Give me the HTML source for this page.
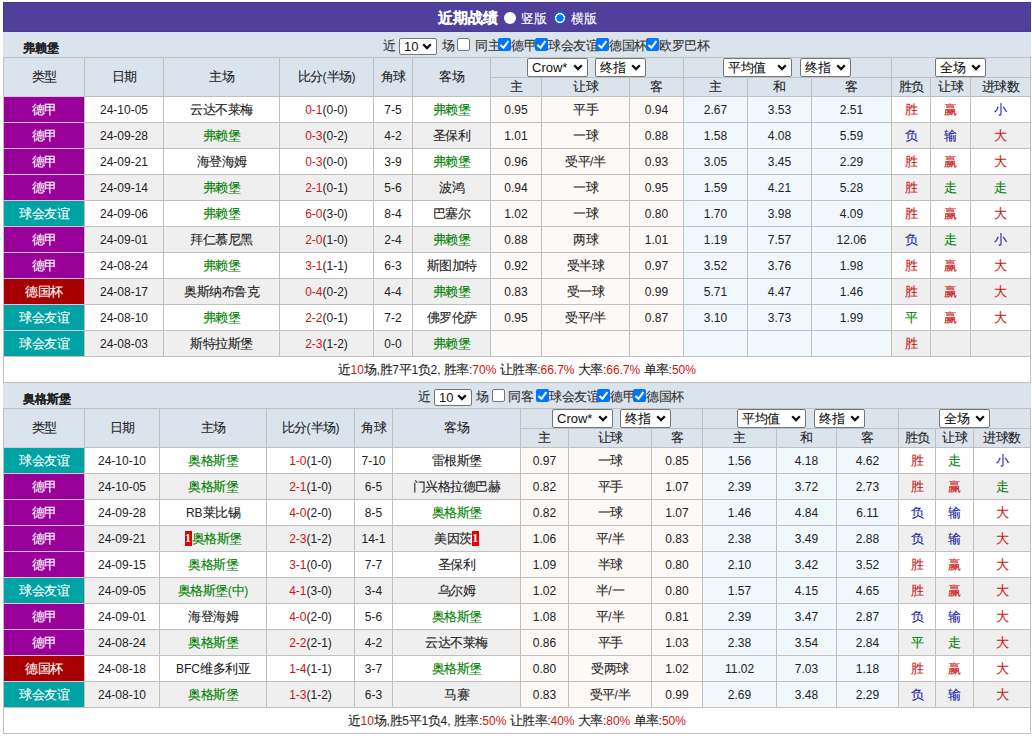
<!DOCTYPE html><html><head><meta charset="utf-8"><style>
html,body{margin:0;padding:0;background:#fff;width:1032px;height:736px;overflow:hidden}
body{position:relative;font-family:"Liberation Sans",sans-serif;font-size:12px;color:#222}
body div{position:absolute}
.c p{margin:0}
.z{font-style:normal;font-size:12.5px;letter-spacing:-0.5px;-webkit-text-stroke:0.1px currentColor}
.ttl .z{font-size:inherit;letter-spacing:0}
.c{display:flex;align-items:center;justify-content:center;white-space:nowrap;line-height:12px}
.t{white-space:nowrap;line-height:14px;color:#333}
.sel{background:#fff;border:1px solid #767676;border-radius:2px;font-size:13px;color:#111;line-height:15px}
.sel span{position:absolute;left:4px;top:1px}
.cb{width:11px;height:11px;border:1px solid #767676;border-radius:2px;background:#fff}
.cb.on{width:13px;height:13px;border:none;background:#0075ff}
.cb svg{position:absolute;left:0;top:0}
.radio{width:12px;height:12px;border-radius:50%;background:#fff}
.radio.on{width:12px;height:12px;border:none;background:radial-gradient(circle at 6px 6px,#0075ff 0,#0075ff 3.4px,#fff 3.9px,#fff 4.8px,#0075ff 5.2px,#0075ff 6px,rgba(0,117,255,0) 6.5px)}
.rc{display:inline-block;background:#e00000;color:#fff;font-weight:bold;width:7px;height:15px;line-height:15px;text-align:center;font-size:12px;font-family:'Liberation Serif',serif;vertical-align:baseline;margin:-3px 0 -3px;position:relative;top:-1px}
</style></head><body><div style="left:3px;top:2px;width:1028px;height:30px;background:#50409c;box-sizing:border-box;border:1px solid #4a3d8e;border-top-color:#463a86"></div><div class="t ttl" style="left:438px;top:9px;color:#fff;font-weight:bold;font-size:15px;line-height:18px"><i class="z">近期战绩</i></div><div class="radio" style="left:504px;top:12px"></div><div class="t" style="left:521px;top:12px;color:#fff"><i class="z">竖版</i></div><div class="radio on" style="left:554px;top:12px"></div><div class="t" style="left:571px;top:12px;color:#fff"><i class="z">横版</i></div><div style="left:3px;top:32px;width:1028px;height:25px;background:#dbe3ed"></div><div class="t ttl" style="left:23px;top:41px;font-weight:bold;color:#222"><i class="z">弗赖堡</i></div><div class="t" style="left:383px;top:39px;"><i class="z">近</i></div><div class="sel" style="left:399px;top:38px;width:36px;height:15px"><span style="top:0px">10</span><svg width="10" height="7" viewBox="0 0 10 7" style="position:absolute;right:4px;top:4px"><path d="M1.2 1.3 L5 5.1 L8.8 1.3" stroke="#111" stroke-width="2.3" fill="none"/></svg></div><div class="t" style="left:442px;top:39px;"><i class="z">场</i></div><div class="cb" style="left:457px;top:38px"></div><div class="t" style="left:475px;top:39px;"><i class="z">同主</i></div><div class="cb on" style="left:498px;top:38px"><svg width="13" height="13" viewBox="0 0 13 13"><path d="M2.4 7.0 L5.5 9.8 L10.4 3.0" stroke="#fff" stroke-width="2.1" fill="none"/></svg></div><div class="t" style="left:511px;top:39px;"><i class="z">德甲</i></div><div class="cb on" style="left:535px;top:38px"><svg width="13" height="13" viewBox="0 0 13 13"><path d="M2.4 7.0 L5.5 9.8 L10.4 3.0" stroke="#fff" stroke-width="2.1" fill="none"/></svg></div><div class="t" style="left:548px;top:39px;"><i class="z">球会友谊</i></div><div class="cb on" style="left:596px;top:38px"><svg width="13" height="13" viewBox="0 0 13 13"><path d="M2.4 7.0 L5.5 9.8 L10.4 3.0" stroke="#fff" stroke-width="2.1" fill="none"/></svg></div><div class="t" style="left:609px;top:39px;"><i class="z">德国杯</i></div><div class="cb on" style="left:646px;top:38px"><svg width="13" height="13" viewBox="0 0 13 13"><path d="M2.4 7.0 L5.5 9.8 L10.4 3.0" stroke="#fff" stroke-width="2.1" fill="none"/></svg></div><div class="t" style="left:659px;top:39px;"><i class="z">欧罗巴杯</i></div><div style="left:3px;top:57px;width:1028px;height:39px;background:#dbe3ed"></div><div style="left:3px;top:97px;width:1028px;height:25px;background:#fff"></div><div style="left:491px;top:97px;width:193px;height:25px;background:#fdf9f6"></div><div style="left:684px;top:97px;width:208px;height:25px;background:#f1f8fc"></div><div style="left:4px;top:97px;width:80px;height:25px;background:#990099"></div><div style="left:3px;top:123px;width:1028px;height:25px;background:#efefef"></div><div style="left:491px;top:123px;width:193px;height:25px;background:#fdf9f6"></div><div style="left:684px;top:123px;width:208px;height:25px;background:#f1f8fc"></div><div style="left:4px;top:123px;width:80px;height:25px;background:#990099"></div><div style="left:3px;top:149px;width:1028px;height:25px;background:#fff"></div><div style="left:491px;top:149px;width:193px;height:25px;background:#fdf9f6"></div><div style="left:684px;top:149px;width:208px;height:25px;background:#f1f8fc"></div><div style="left:4px;top:149px;width:80px;height:25px;background:#990099"></div><div style="left:3px;top:175px;width:1028px;height:25px;background:#efefef"></div><div style="left:491px;top:175px;width:193px;height:25px;background:#fdf9f6"></div><div style="left:684px;top:175px;width:208px;height:25px;background:#f1f8fc"></div><div style="left:4px;top:175px;width:80px;height:25px;background:#990099"></div><div style="left:3px;top:201px;width:1028px;height:25px;background:#fff"></div><div style="left:491px;top:201px;width:193px;height:25px;background:#fdf9f6"></div><div style="left:684px;top:201px;width:208px;height:25px;background:#f1f8fc"></div><div style="left:4px;top:201px;width:80px;height:25px;background:#00a3a3"></div><div style="left:3px;top:227px;width:1028px;height:25px;background:#efefef"></div><div style="left:491px;top:227px;width:193px;height:25px;background:#fdf9f6"></div><div style="left:684px;top:227px;width:208px;height:25px;background:#f1f8fc"></div><div style="left:4px;top:227px;width:80px;height:25px;background:#990099"></div><div style="left:3px;top:253px;width:1028px;height:25px;background:#fff"></div><div style="left:491px;top:253px;width:193px;height:25px;background:#fdf9f6"></div><div style="left:684px;top:253px;width:208px;height:25px;background:#f1f8fc"></div><div style="left:4px;top:253px;width:80px;height:25px;background:#990099"></div><div style="left:3px;top:279px;width:1028px;height:25px;background:#efefef"></div><div style="left:491px;top:279px;width:193px;height:25px;background:#fdf9f6"></div><div style="left:684px;top:279px;width:208px;height:25px;background:#f1f8fc"></div><div style="left:4px;top:279px;width:80px;height:25px;background:#a80000"></div><div style="left:3px;top:305px;width:1028px;height:25px;background:#fff"></div><div style="left:491px;top:305px;width:193px;height:25px;background:#fdf9f6"></div><div style="left:684px;top:305px;width:208px;height:25px;background:#f1f8fc"></div><div style="left:4px;top:305px;width:80px;height:25px;background:#00a3a3"></div><div style="left:3px;top:331px;width:1028px;height:25px;background:#efefef"></div><div style="left:491px;top:331px;width:193px;height:25px;background:#fdf9f6"></div><div style="left:684px;top:331px;width:208px;height:25px;background:#f1f8fc"></div><div style="left:4px;top:331px;width:80px;height:25px;background:#00a3a3"></div><div style="left:3px;top:357px;width:1028px;height:25px;background:#fff"></div><div style="left:3px;top:57px;width:1028px;height:1px;background:#c0c0c0"></div><div style="left:490px;top:77px;width:541px;height:1px;background:#c0c0c0"></div><div style="left:3px;top:96px;width:1028px;height:1px;background:#c0c0c0"></div><div style="left:3px;top:96px;width:1028px;height:1px;background:#c0c0c0"></div><div style="left:3px;top:122px;width:1028px;height:1px;background:#c0c0c0"></div><div style="left:3px;top:148px;width:1028px;height:1px;background:#c0c0c0"></div><div style="left:3px;top:174px;width:1028px;height:1px;background:#c0c0c0"></div><div style="left:3px;top:200px;width:1028px;height:1px;background:#c0c0c0"></div><div style="left:3px;top:226px;width:1028px;height:1px;background:#c0c0c0"></div><div style="left:3px;top:252px;width:1028px;height:1px;background:#c0c0c0"></div><div style="left:3px;top:278px;width:1028px;height:1px;background:#c0c0c0"></div><div style="left:3px;top:304px;width:1028px;height:1px;background:#c0c0c0"></div><div style="left:3px;top:330px;width:1028px;height:1px;background:#c0c0c0"></div><div style="left:3px;top:356px;width:1028px;height:1px;background:#c0c0c0"></div><div style="left:3px;top:382px;width:1028px;height:1px;background:#c0c0c0"></div><div style="left:3px;top:57px;width:1px;height:326px;background:#c0c0c0"></div><div style="left:1030px;top:57px;width:1px;height:326px;background:#c0c0c0"></div><div style="left:84px;top:57px;width:1px;height:300px;background:#c0c0c0"></div><div style="left:163px;top:57px;width:1px;height:300px;background:#c0c0c0"></div><div style="left:279px;top:57px;width:1px;height:300px;background:#c0c0c0"></div><div style="left:373px;top:57px;width:1px;height:300px;background:#c0c0c0"></div><div style="left:412px;top:57px;width:1px;height:300px;background:#c0c0c0"></div><div style="left:490px;top:57px;width:1px;height:300px;background:#c0c0c0"></div><div style="left:541px;top:77px;width:1px;height:280px;background:#c0c0c0"></div><div style="left:629px;top:77px;width:1px;height:280px;background:#c0c0c0"></div><div style="left:683px;top:57px;width:1px;height:300px;background:#c0c0c0"></div><div style="left:747px;top:77px;width:1px;height:280px;background:#c0c0c0"></div><div style="left:811px;top:77px;width:1px;height:280px;background:#c0c0c0"></div><div style="left:891px;top:57px;width:1px;height:300px;background:#c0c0c0"></div><div style="left:930px;top:77px;width:1px;height:280px;background:#c0c0c0"></div><div style="left:970px;top:77px;width:1px;height:280px;background:#c0c0c0"></div><div style="left:4px;top:122px;width:80px;height:1px;background:#e2c4e2"></div><div style="left:4px;top:148px;width:80px;height:1px;background:#e2c4e2"></div><div style="left:4px;top:174px;width:80px;height:1px;background:#e2c4e2"></div><div style="left:4px;top:200px;width:80px;height:1px;background:#e2c4e2"></div><div style="left:4px;top:226px;width:80px;height:1px;background:#e2c4e2"></div><div style="left:4px;top:252px;width:80px;height:1px;background:#e2c4e2"></div><div style="left:4px;top:278px;width:80px;height:1px;background:#e2c4e2"></div><div style="left:4px;top:304px;width:80px;height:1px;background:#e2c4e2"></div><div style="left:4px;top:330px;width:80px;height:1px;background:#e2c4e2"></div><div style="left:4px;top:96px;width:80px;height:1px;background:#d8c8e0"></div><div class="c" style="left:4px;top:58px;width:80px;height:38px;"><p><i class="z">类型</i></p></div><div class="c" style="left:85px;top:58px;width:78px;height:38px;"><p><i class="z">日期</i></p></div><div class="c" style="left:164px;top:58px;width:115px;height:38px;"><p><i class="z">主场</i></p></div><div class="c" style="left:280px;top:58px;width:93px;height:38px;"><p><i class="z">比分</i>(<i class="z">半场</i>)</p></div><div class="c" style="left:374px;top:58px;width:38px;height:38px;"><p><i class="z">角球</i></p></div><div class="c" style="left:413px;top:58px;width:77px;height:38px;"><p><i class="z">客场</i></p></div><div class="c" style="left:491px;top:78px;width:50px;height:18px;"><p><i class="z">主</i></p></div><div class="c" style="left:542px;top:78px;width:87px;height:18px;"><p><i class="z">让球</i></p></div><div class="c" style="left:630px;top:78px;width:53px;height:18px;"><p><i class="z">客</i></p></div><div class="c" style="left:684px;top:78px;width:63px;height:18px;"><p><i class="z">主</i></p></div><div class="c" style="left:748px;top:78px;width:63px;height:18px;"><p><i class="z">和</i></p></div><div class="c" style="left:812px;top:78px;width:79px;height:18px;"><p><i class="z">客</i></p></div><div class="c" style="left:892px;top:78px;width:38px;height:18px;"><p><i class="z">胜负</i></p></div><div class="c" style="left:931px;top:78px;width:39px;height:18px;"><p><i class="z">让球</i></p></div><div class="c" style="left:971px;top:78px;width:59px;height:18px;"><p><i class="z">进球数</i></p></div><div class="c" style="left:4px;top:97px;width:80px;height:25px;color:#fff"><p><i class="z">德甲</i></p></div><div class="c" style="left:85px;top:97px;width:78px;height:25px;"><p>24-10-05</p></div><div class="c" style="left:164px;top:97px;width:115px;height:25px;"><p><i class="z">云达不莱梅</i></p></div><div class="c" style="left:280px;top:97px;width:93px;height:25px;"><p><span style="color:#cc1414">0-1</span>(0-0)</p></div><div class="c" style="left:374px;top:97px;width:38px;height:25px;"><p>7-5</p></div><div class="c" style="left:413px;top:97px;width:77px;height:25px;"><p><span style="color:#008000"><i class="z">弗赖堡</i></span></p></div><div class="c" style="left:491px;top:97px;width:50px;height:25px;"><p>0.95</p></div><div class="c" style="left:684px;top:97px;width:63px;height:25px;"><p>2.67</p></div><div class="c" style="left:892px;top:97px;width:38px;height:25px;color:#cc1414"><p><i class="z">胜</i></p></div><div class="c" style="left:542px;top:97px;width:87px;height:25px;"><p><i class="z">平手</i></p></div><div class="c" style="left:748px;top:97px;width:63px;height:25px;"><p>3.53</p></div><div class="c" style="left:931px;top:97px;width:39px;height:25px;color:#cc1414"><p><i class="z">赢</i></p></div><div class="c" style="left:630px;top:97px;width:53px;height:25px;"><p>0.94</p></div><div class="c" style="left:812px;top:97px;width:79px;height:25px;"><p>2.51</p></div><div class="c" style="left:971px;top:97px;width:59px;height:25px;color:#1c1ca8"><p><i class="z">小</i></p></div><div class="c" style="left:4px;top:123px;width:80px;height:25px;color:#fff"><p><i class="z">德甲</i></p></div><div class="c" style="left:85px;top:123px;width:78px;height:25px;"><p>24-09-28</p></div><div class="c" style="left:164px;top:123px;width:115px;height:25px;"><p><span style="color:#008000"><i class="z">弗赖堡</i></span></p></div><div class="c" style="left:280px;top:123px;width:93px;height:25px;"><p><span style="color:#cc1414">0-3</span>(0-2)</p></div><div class="c" style="left:374px;top:123px;width:38px;height:25px;"><p>4-2</p></div><div class="c" style="left:413px;top:123px;width:77px;height:25px;"><p><i class="z">圣保利</i></p></div><div class="c" style="left:491px;top:123px;width:50px;height:25px;"><p>1.01</p></div><div class="c" style="left:684px;top:123px;width:63px;height:25px;"><p>1.58</p></div><div class="c" style="left:892px;top:123px;width:38px;height:25px;color:#1c1ca8"><p><i class="z">负</i></p></div><div class="c" style="left:542px;top:123px;width:87px;height:25px;"><p><i class="z">一球</i></p></div><div class="c" style="left:748px;top:123px;width:63px;height:25px;"><p>4.08</p></div><div class="c" style="left:931px;top:123px;width:39px;height:25px;color:#1c1ca8"><p><i class="z">输</i></p></div><div class="c" style="left:630px;top:123px;width:53px;height:25px;"><p>0.88</p></div><div class="c" style="left:812px;top:123px;width:79px;height:25px;"><p>5.59</p></div><div class="c" style="left:971px;top:123px;width:59px;height:25px;color:#cc1414"><p><i class="z">大</i></p></div><div class="c" style="left:4px;top:149px;width:80px;height:25px;color:#fff"><p><i class="z">德甲</i></p></div><div class="c" style="left:85px;top:149px;width:78px;height:25px;"><p>24-09-21</p></div><div class="c" style="left:164px;top:149px;width:115px;height:25px;"><p><i class="z">海登海姆</i></p></div><div class="c" style="left:280px;top:149px;width:93px;height:25px;"><p><span style="color:#cc1414">0-3</span>(0-0)</p></div><div class="c" style="left:374px;top:149px;width:38px;height:25px;"><p>3-9</p></div><div class="c" style="left:413px;top:149px;width:77px;height:25px;"><p><span style="color:#008000"><i class="z">弗赖堡</i></span></p></div><div class="c" style="left:491px;top:149px;width:50px;height:25px;"><p>0.96</p></div><div class="c" style="left:684px;top:149px;width:63px;height:25px;"><p>3.05</p></div><div class="c" style="left:892px;top:149px;width:38px;height:25px;color:#cc1414"><p><i class="z">胜</i></p></div><div class="c" style="left:542px;top:149px;width:87px;height:25px;"><p><i class="z">受平</i>/<i class="z">半</i></p></div><div class="c" style="left:748px;top:149px;width:63px;height:25px;"><p>3.45</p></div><div class="c" style="left:931px;top:149px;width:39px;height:25px;color:#cc1414"><p><i class="z">赢</i></p></div><div class="c" style="left:630px;top:149px;width:53px;height:25px;"><p>0.93</p></div><div class="c" style="left:812px;top:149px;width:79px;height:25px;"><p>2.29</p></div><div class="c" style="left:971px;top:149px;width:59px;height:25px;color:#cc1414"><p><i class="z">大</i></p></div><div class="c" style="left:4px;top:175px;width:80px;height:25px;color:#fff"><p><i class="z">德甲</i></p></div><div class="c" style="left:85px;top:175px;width:78px;height:25px;"><p>24-09-14</p></div><div class="c" style="left:164px;top:175px;width:115px;height:25px;"><p><span style="color:#008000"><i class="z">弗赖堡</i></span></p></div><div class="c" style="left:280px;top:175px;width:93px;height:25px;"><p><span style="color:#cc1414">2-1</span>(0-1)</p></div><div class="c" style="left:374px;top:175px;width:38px;height:25px;"><p>5-6</p></div><div class="c" style="left:413px;top:175px;width:77px;height:25px;"><p><i class="z">波鸿</i></p></div><div class="c" style="left:491px;top:175px;width:50px;height:25px;"><p>0.94</p></div><div class="c" style="left:684px;top:175px;width:63px;height:25px;"><p>1.59</p></div><div class="c" style="left:892px;top:175px;width:38px;height:25px;color:#cc1414"><p><i class="z">胜</i></p></div><div class="c" style="left:542px;top:175px;width:87px;height:25px;"><p><i class="z">一球</i></p></div><div class="c" style="left:748px;top:175px;width:63px;height:25px;"><p>4.21</p></div><div class="c" style="left:931px;top:175px;width:39px;height:25px;color:#008000"><p><i class="z">走</i></p></div><div class="c" style="left:630px;top:175px;width:53px;height:25px;"><p>0.95</p></div><div class="c" style="left:812px;top:175px;width:79px;height:25px;"><p>5.28</p></div><div class="c" style="left:971px;top:175px;width:59px;height:25px;color:#008000"><p><i class="z">走</i></p></div><div class="c" style="left:4px;top:201px;width:80px;height:25px;color:#fff"><p><i class="z">球会友谊</i></p></div><div class="c" style="left:85px;top:201px;width:78px;height:25px;"><p>24-09-06</p></div><div class="c" style="left:164px;top:201px;width:115px;height:25px;"><p><span style="color:#008000"><i class="z">弗赖堡</i></span></p></div><div class="c" style="left:280px;top:201px;width:93px;height:25px;"><p><span style="color:#cc1414">6-0</span>(3-0)</p></div><div class="c" style="left:374px;top:201px;width:38px;height:25px;"><p>8-4</p></div><div class="c" style="left:413px;top:201px;width:77px;height:25px;"><p><i class="z">巴塞尔</i></p></div><div class="c" style="left:491px;top:201px;width:50px;height:25px;"><p>1.02</p></div><div class="c" style="left:684px;top:201px;width:63px;height:25px;"><p>1.70</p></div><div class="c" style="left:892px;top:201px;width:38px;height:25px;color:#cc1414"><p><i class="z">胜</i></p></div><div class="c" style="left:542px;top:201px;width:87px;height:25px;"><p><i class="z">一球</i></p></div><div class="c" style="left:748px;top:201px;width:63px;height:25px;"><p>3.98</p></div><div class="c" style="left:931px;top:201px;width:39px;height:25px;color:#cc1414"><p><i class="z">赢</i></p></div><div class="c" style="left:630px;top:201px;width:53px;height:25px;"><p>0.80</p></div><div class="c" style="left:812px;top:201px;width:79px;height:25px;"><p>4.09</p></div><div class="c" style="left:971px;top:201px;width:59px;height:25px;color:#cc1414"><p><i class="z">大</i></p></div><div class="c" style="left:4px;top:227px;width:80px;height:25px;color:#fff"><p><i class="z">德甲</i></p></div><div class="c" style="left:85px;top:227px;width:78px;height:25px;"><p>24-09-01</p></div><div class="c" style="left:164px;top:227px;width:115px;height:25px;"><p><i class="z">拜仁慕尼黑</i></p></div><div class="c" style="left:280px;top:227px;width:93px;height:25px;"><p><span style="color:#cc1414">2-0</span>(1-0)</p></div><div class="c" style="left:374px;top:227px;width:38px;height:25px;"><p>2-4</p></div><div class="c" style="left:413px;top:227px;width:77px;height:25px;"><p><span style="color:#008000"><i class="z">弗赖堡</i></span></p></div><div class="c" style="left:491px;top:227px;width:50px;height:25px;"><p>0.88</p></div><div class="c" style="left:684px;top:227px;width:63px;height:25px;"><p>1.19</p></div><div class="c" style="left:892px;top:227px;width:38px;height:25px;color:#1c1ca8"><p><i class="z">负</i></p></div><div class="c" style="left:542px;top:227px;width:87px;height:25px;"><p><i class="z">两球</i></p></div><div class="c" style="left:748px;top:227px;width:63px;height:25px;"><p>7.57</p></div><div class="c" style="left:931px;top:227px;width:39px;height:25px;color:#008000"><p><i class="z">走</i></p></div><div class="c" style="left:630px;top:227px;width:53px;height:25px;"><p>1.01</p></div><div class="c" style="left:812px;top:227px;width:79px;height:25px;"><p>12.06</p></div><div class="c" style="left:971px;top:227px;width:59px;height:25px;color:#1c1ca8"><p><i class="z">小</i></p></div><div class="c" style="left:4px;top:253px;width:80px;height:25px;color:#fff"><p><i class="z">德甲</i></p></div><div class="c" style="left:85px;top:253px;width:78px;height:25px;"><p>24-08-24</p></div><div class="c" style="left:164px;top:253px;width:115px;height:25px;"><p><span style="color:#008000"><i class="z">弗赖堡</i></span></p></div><div class="c" style="left:280px;top:253px;width:93px;height:25px;"><p><span style="color:#cc1414">3-1</span>(1-1)</p></div><div class="c" style="left:374px;top:253px;width:38px;height:25px;"><p>6-3</p></div><div class="c" style="left:413px;top:253px;width:77px;height:25px;"><p><i class="z">斯图加特</i></p></div><div class="c" style="left:491px;top:253px;width:50px;height:25px;"><p>0.92</p></div><div class="c" style="left:684px;top:253px;width:63px;height:25px;"><p>3.52</p></div><div class="c" style="left:892px;top:253px;width:38px;height:25px;color:#cc1414"><p><i class="z">胜</i></p></div><div class="c" style="left:542px;top:253px;width:87px;height:25px;"><p><i class="z">受半球</i></p></div><div class="c" style="left:748px;top:253px;width:63px;height:25px;"><p>3.76</p></div><div class="c" style="left:931px;top:253px;width:39px;height:25px;color:#cc1414"><p><i class="z">赢</i></p></div><div class="c" style="left:630px;top:253px;width:53px;height:25px;"><p>0.97</p></div><div class="c" style="left:812px;top:253px;width:79px;height:25px;"><p>1.98</p></div><div class="c" style="left:971px;top:253px;width:59px;height:25px;color:#cc1414"><p><i class="z">大</i></p></div><div class="c" style="left:4px;top:279px;width:80px;height:25px;color:#fff"><p><i class="z">德国杯</i></p></div><div class="c" style="left:85px;top:279px;width:78px;height:25px;"><p>24-08-17</p></div><div class="c" style="left:164px;top:279px;width:115px;height:25px;"><p><i class="z">奥斯纳布鲁克</i></p></div><div class="c" style="left:280px;top:279px;width:93px;height:25px;"><p><span style="color:#cc1414">0-4</span>(0-2)</p></div><div class="c" style="left:374px;top:279px;width:38px;height:25px;"><p>4-4</p></div><div class="c" style="left:413px;top:279px;width:77px;height:25px;"><p><span style="color:#008000"><i class="z">弗赖堡</i></span></p></div><div class="c" style="left:491px;top:279px;width:50px;height:25px;"><p>0.83</p></div><div class="c" style="left:684px;top:279px;width:63px;height:25px;"><p>5.71</p></div><div class="c" style="left:892px;top:279px;width:38px;height:25px;color:#cc1414"><p><i class="z">胜</i></p></div><div class="c" style="left:542px;top:279px;width:87px;height:25px;"><p><i class="z">受一球</i></p></div><div class="c" style="left:748px;top:279px;width:63px;height:25px;"><p>4.47</p></div><div class="c" style="left:931px;top:279px;width:39px;height:25px;color:#cc1414"><p><i class="z">赢</i></p></div><div class="c" style="left:630px;top:279px;width:53px;height:25px;"><p>0.99</p></div><div class="c" style="left:812px;top:279px;width:79px;height:25px;"><p>1.46</p></div><div class="c" style="left:971px;top:279px;width:59px;height:25px;color:#cc1414"><p><i class="z">大</i></p></div><div class="c" style="left:4px;top:305px;width:80px;height:25px;color:#fff"><p><i class="z">球会友谊</i></p></div><div class="c" style="left:85px;top:305px;width:78px;height:25px;"><p>24-08-10</p></div><div class="c" style="left:164px;top:305px;width:115px;height:25px;"><p><span style="color:#008000"><i class="z">弗赖堡</i></span></p></div><div class="c" style="left:280px;top:305px;width:93px;height:25px;"><p><span style="color:#cc1414">2-2</span>(0-1)</p></div><div class="c" style="left:374px;top:305px;width:38px;height:25px;"><p>7-2</p></div><div class="c" style="left:413px;top:305px;width:77px;height:25px;"><p><i class="z">佛罗伦萨</i></p></div><div class="c" style="left:491px;top:305px;width:50px;height:25px;"><p>0.95</p></div><div class="c" style="left:684px;top:305px;width:63px;height:25px;"><p>3.10</p></div><div class="c" style="left:892px;top:305px;width:38px;height:25px;color:#008000"><p><i class="z">平</i></p></div><div class="c" style="left:542px;top:305px;width:87px;height:25px;"><p><i class="z">受平</i>/<i class="z">半</i></p></div><div class="c" style="left:748px;top:305px;width:63px;height:25px;"><p>3.73</p></div><div class="c" style="left:931px;top:305px;width:39px;height:25px;color:#cc1414"><p><i class="z">赢</i></p></div><div class="c" style="left:630px;top:305px;width:53px;height:25px;"><p>0.87</p></div><div class="c" style="left:812px;top:305px;width:79px;height:25px;"><p>1.99</p></div><div class="c" style="left:971px;top:305px;width:59px;height:25px;color:#cc1414"><p><i class="z">大</i></p></div><div class="c" style="left:4px;top:331px;width:80px;height:25px;color:#fff"><p><i class="z">球会友谊</i></p></div><div class="c" style="left:85px;top:331px;width:78px;height:25px;"><p>24-08-03</p></div><div class="c" style="left:164px;top:331px;width:115px;height:25px;"><p><i class="z">斯特拉斯堡</i></p></div><div class="c" style="left:280px;top:331px;width:93px;height:25px;"><p><span style="color:#cc1414">2-3</span>(1-2)</p></div><div class="c" style="left:374px;top:331px;width:38px;height:25px;"><p>0-0</p></div><div class="c" style="left:413px;top:331px;width:77px;height:25px;"><p><span style="color:#008000"><i class="z">弗赖堡</i></span></p></div><div class="c" style="left:491px;top:331px;width:50px;height:25px;"><p></p></div><div class="c" style="left:684px;top:331px;width:63px;height:25px;"><p></p></div><div class="c" style="left:892px;top:331px;width:38px;height:25px;color:#cc1414"><p><i class="z">胜</i></p></div><div class="c" style="left:542px;top:331px;width:87px;height:25px;"><p></p></div><div class="c" style="left:748px;top:331px;width:63px;height:25px;"><p></p></div><div class="c" style="left:931px;top:331px;width:39px;height:25px;color:#222"><p></p></div><div class="c" style="left:630px;top:331px;width:53px;height:25px;"><p></p></div><div class="c" style="left:812px;top:331px;width:79px;height:25px;"><p></p></div><div class="c" style="left:971px;top:331px;width:59px;height:25px;color:#222"><p></p></div><div class="c" style="left:4px;top:357px;width:1026px;height:25px;"><p><i class="z">近</i><span style="color:#cc1414">10</span><i class="z">场</i>,<i class="z">胜</i>7<i class="z">平</i>1<i class="z">负</i>2, <i class="z">胜率</i>:<span style="color:#cc1414">70%</span> <i class="z">让胜率</i>:<span style="color:#cc1414">66.7%</span> <i class="z">大率</i>:<span style="color:#cc1414">66.7%</span> <i class="z">单率</i>:<span style="color:#cc1414">50%</span></p></div><div class="sel" style="left:527px;top:58px;width:59px;height:17px"><span style="top:1px">Crow*</span><svg width="10" height="7" viewBox="0 0 10 7" style="position:absolute;right:4px;top:5px"><path d="M1.2 1.3 L5 5.1 L8.8 1.3" stroke="#111" stroke-width="2.3" fill="none"/></svg></div><div class="sel" style="left:595px;top:58px;width:49px;height:17px"><span style="top:1px"><i class="z">终指</i></span><svg width="10" height="7" viewBox="0 0 10 7" style="position:absolute;right:4px;top:5px"><path d="M1.2 1.3 L5 5.1 L8.8 1.3" stroke="#111" stroke-width="2.3" fill="none"/></svg></div><div class="sel" style="left:723px;top:58px;width:67px;height:17px"><span style="top:1px"><i class="z">平均值</i></span><svg width="10" height="7" viewBox="0 0 10 7" style="position:absolute;right:4px;top:5px"><path d="M1.2 1.3 L5 5.1 L8.8 1.3" stroke="#111" stroke-width="2.3" fill="none"/></svg></div><div class="sel" style="left:800px;top:58px;width:49px;height:17px"><span style="top:1px"><i class="z">终指</i></span><svg width="10" height="7" viewBox="0 0 10 7" style="position:absolute;right:4px;top:5px"><path d="M1.2 1.3 L5 5.1 L8.8 1.3" stroke="#111" stroke-width="2.3" fill="none"/></svg></div><div class="sel" style="left:935px;top:58px;width:49px;height:17px"><span style="top:1px"><i class="z">全场</i></span><svg width="10" height="7" viewBox="0 0 10 7" style="position:absolute;right:4px;top:5px"><path d="M1.2 1.3 L5 5.1 L8.8 1.3" stroke="#111" stroke-width="2.3" fill="none"/></svg></div><div style="left:3px;top:383px;width:1028px;height:25px;background:#dbe3ed"></div><div class="t ttl" style="left:23px;top:392px;font-weight:bold;color:#222"><i class="z">奥格斯堡</i></div><div class="t" style="left:418px;top:390px;"><i class="z">近</i></div><div class="sel" style="left:434px;top:389px;width:36px;height:15px"><span style="top:0px">10</span><svg width="10" height="7" viewBox="0 0 10 7" style="position:absolute;right:4px;top:4px"><path d="M1.2 1.3 L5 5.1 L8.8 1.3" stroke="#111" stroke-width="2.3" fill="none"/></svg></div><div class="t" style="left:476px;top:390px;"><i class="z">场</i></div><div class="cb" style="left:492px;top:389px"></div><div class="t" style="left:508px;top:390px;"><i class="z">同客</i></div><div class="cb on" style="left:536px;top:389px"><svg width="13" height="13" viewBox="0 0 13 13"><path d="M2.4 7.0 L5.5 9.8 L10.4 3.0" stroke="#fff" stroke-width="2.1" fill="none"/></svg></div><div class="t" style="left:549px;top:390px;"><i class="z">球会友谊</i></div><div class="cb on" style="left:597px;top:389px"><svg width="13" height="13" viewBox="0 0 13 13"><path d="M2.4 7.0 L5.5 9.8 L10.4 3.0" stroke="#fff" stroke-width="2.1" fill="none"/></svg></div><div class="t" style="left:610px;top:390px;"><i class="z">德甲</i></div><div class="cb on" style="left:633px;top:389px"><svg width="13" height="13" viewBox="0 0 13 13"><path d="M2.4 7.0 L5.5 9.8 L10.4 3.0" stroke="#fff" stroke-width="2.1" fill="none"/></svg></div><div class="t" style="left:646px;top:390px;"><i class="z">德国杯</i></div><div style="left:3px;top:408px;width:1028px;height:39px;background:#dbe3ed"></div><div style="left:3px;top:448px;width:1028px;height:25px;background:#fff"></div><div style="left:521px;top:448px;width:182px;height:25px;background:#fdf9f6"></div><div style="left:703px;top:448px;width:196px;height:25px;background:#f1f8fc"></div><div style="left:4px;top:448px;width:80px;height:25px;background:#00a3a3"></div><div style="left:3px;top:474px;width:1028px;height:25px;background:#efefef"></div><div style="left:521px;top:474px;width:182px;height:25px;background:#fdf9f6"></div><div style="left:703px;top:474px;width:196px;height:25px;background:#f1f8fc"></div><div style="left:4px;top:474px;width:80px;height:25px;background:#990099"></div><div style="left:3px;top:500px;width:1028px;height:25px;background:#fff"></div><div style="left:521px;top:500px;width:182px;height:25px;background:#fdf9f6"></div><div style="left:703px;top:500px;width:196px;height:25px;background:#f1f8fc"></div><div style="left:4px;top:500px;width:80px;height:25px;background:#990099"></div><div style="left:3px;top:526px;width:1028px;height:25px;background:#efefef"></div><div style="left:521px;top:526px;width:182px;height:25px;background:#fdf9f6"></div><div style="left:703px;top:526px;width:196px;height:25px;background:#f1f8fc"></div><div style="left:4px;top:526px;width:80px;height:25px;background:#990099"></div><div style="left:3px;top:552px;width:1028px;height:25px;background:#fff"></div><div style="left:521px;top:552px;width:182px;height:25px;background:#fdf9f6"></div><div style="left:703px;top:552px;width:196px;height:25px;background:#f1f8fc"></div><div style="left:4px;top:552px;width:80px;height:25px;background:#990099"></div><div style="left:3px;top:578px;width:1028px;height:25px;background:#efefef"></div><div style="left:521px;top:578px;width:182px;height:25px;background:#fdf9f6"></div><div style="left:703px;top:578px;width:196px;height:25px;background:#f1f8fc"></div><div style="left:4px;top:578px;width:80px;height:25px;background:#00a3a3"></div><div style="left:3px;top:604px;width:1028px;height:25px;background:#fff"></div><div style="left:521px;top:604px;width:182px;height:25px;background:#fdf9f6"></div><div style="left:703px;top:604px;width:196px;height:25px;background:#f1f8fc"></div><div style="left:4px;top:604px;width:80px;height:25px;background:#990099"></div><div style="left:3px;top:630px;width:1028px;height:25px;background:#efefef"></div><div style="left:521px;top:630px;width:182px;height:25px;background:#fdf9f6"></div><div style="left:703px;top:630px;width:196px;height:25px;background:#f1f8fc"></div><div style="left:4px;top:630px;width:80px;height:25px;background:#990099"></div><div style="left:3px;top:656px;width:1028px;height:25px;background:#fff"></div><div style="left:521px;top:656px;width:182px;height:25px;background:#fdf9f6"></div><div style="left:703px;top:656px;width:196px;height:25px;background:#f1f8fc"></div><div style="left:4px;top:656px;width:80px;height:25px;background:#a80000"></div><div style="left:3px;top:682px;width:1028px;height:25px;background:#efefef"></div><div style="left:521px;top:682px;width:182px;height:25px;background:#fdf9f6"></div><div style="left:703px;top:682px;width:196px;height:25px;background:#f1f8fc"></div><div style="left:4px;top:682px;width:80px;height:25px;background:#00a3a3"></div><div style="left:3px;top:708px;width:1028px;height:25px;background:#fff"></div><div style="left:3px;top:408px;width:1028px;height:1px;background:#c0c0c0"></div><div style="left:520px;top:428px;width:511px;height:1px;background:#c0c0c0"></div><div style="left:3px;top:447px;width:1028px;height:1px;background:#c0c0c0"></div><div style="left:3px;top:447px;width:1028px;height:1px;background:#c0c0c0"></div><div style="left:3px;top:473px;width:1028px;height:1px;background:#c0c0c0"></div><div style="left:3px;top:499px;width:1028px;height:1px;background:#c0c0c0"></div><div style="left:3px;top:525px;width:1028px;height:1px;background:#c0c0c0"></div><div style="left:3px;top:551px;width:1028px;height:1px;background:#c0c0c0"></div><div style="left:3px;top:577px;width:1028px;height:1px;background:#c0c0c0"></div><div style="left:3px;top:603px;width:1028px;height:1px;background:#c0c0c0"></div><div style="left:3px;top:629px;width:1028px;height:1px;background:#c0c0c0"></div><div style="left:3px;top:655px;width:1028px;height:1px;background:#c0c0c0"></div><div style="left:3px;top:681px;width:1028px;height:1px;background:#c0c0c0"></div><div style="left:3px;top:707px;width:1028px;height:1px;background:#c0c0c0"></div><div style="left:3px;top:733px;width:1028px;height:1px;background:#c0c0c0"></div><div style="left:3px;top:408px;width:1px;height:326px;background:#c0c0c0"></div><div style="left:1030px;top:408px;width:1px;height:326px;background:#c0c0c0"></div><div style="left:84px;top:408px;width:1px;height:300px;background:#c0c0c0"></div><div style="left:159px;top:408px;width:1px;height:300px;background:#c0c0c0"></div><div style="left:266px;top:408px;width:1px;height:300px;background:#c0c0c0"></div><div style="left:354px;top:408px;width:1px;height:300px;background:#c0c0c0"></div><div style="left:392px;top:408px;width:1px;height:300px;background:#c0c0c0"></div><div style="left:520px;top:408px;width:1px;height:300px;background:#c0c0c0"></div><div style="left:568px;top:428px;width:1px;height:280px;background:#c0c0c0"></div><div style="left:651px;top:428px;width:1px;height:280px;background:#c0c0c0"></div><div style="left:702px;top:408px;width:1px;height:300px;background:#c0c0c0"></div><div style="left:776px;top:428px;width:1px;height:280px;background:#c0c0c0"></div><div style="left:836px;top:428px;width:1px;height:280px;background:#c0c0c0"></div><div style="left:898px;top:408px;width:1px;height:300px;background:#c0c0c0"></div><div style="left:935px;top:428px;width:1px;height:280px;background:#c0c0c0"></div><div style="left:973px;top:428px;width:1px;height:280px;background:#c0c0c0"></div><div style="left:4px;top:473px;width:80px;height:1px;background:#e2c4e2"></div><div style="left:4px;top:499px;width:80px;height:1px;background:#e2c4e2"></div><div style="left:4px;top:525px;width:80px;height:1px;background:#e2c4e2"></div><div style="left:4px;top:551px;width:80px;height:1px;background:#e2c4e2"></div><div style="left:4px;top:577px;width:80px;height:1px;background:#e2c4e2"></div><div style="left:4px;top:603px;width:80px;height:1px;background:#e2c4e2"></div><div style="left:4px;top:629px;width:80px;height:1px;background:#e2c4e2"></div><div style="left:4px;top:655px;width:80px;height:1px;background:#e2c4e2"></div><div style="left:4px;top:681px;width:80px;height:1px;background:#e2c4e2"></div><div style="left:4px;top:447px;width:80px;height:1px;background:#d8c8e0"></div><div class="c" style="left:4px;top:409px;width:80px;height:38px;"><p><i class="z">类型</i></p></div><div class="c" style="left:85px;top:409px;width:74px;height:38px;"><p><i class="z">日期</i></p></div><div class="c" style="left:160px;top:409px;width:106px;height:38px;"><p><i class="z">主场</i></p></div><div class="c" style="left:267px;top:409px;width:87px;height:38px;"><p><i class="z">比分</i>(<i class="z">半场</i>)</p></div><div class="c" style="left:355px;top:409px;width:37px;height:38px;"><p><i class="z">角球</i></p></div><div class="c" style="left:393px;top:409px;width:127px;height:38px;"><p><i class="z">客场</i></p></div><div class="c" style="left:521px;top:429px;width:47px;height:18px;"><p><i class="z">主</i></p></div><div class="c" style="left:569px;top:429px;width:82px;height:18px;"><p><i class="z">让球</i></p></div><div class="c" style="left:652px;top:429px;width:50px;height:18px;"><p><i class="z">客</i></p></div><div class="c" style="left:703px;top:429px;width:73px;height:18px;"><p><i class="z">主</i></p></div><div class="c" style="left:777px;top:429px;width:59px;height:18px;"><p><i class="z">和</i></p></div><div class="c" style="left:837px;top:429px;width:61px;height:18px;"><p><i class="z">客</i></p></div><div class="c" style="left:899px;top:429px;width:36px;height:18px;"><p><i class="z">胜负</i></p></div><div class="c" style="left:936px;top:429px;width:37px;height:18px;"><p><i class="z">让球</i></p></div><div class="c" style="left:974px;top:429px;width:56px;height:18px;"><p><i class="z">进球数</i></p></div><div class="c" style="left:4px;top:448px;width:80px;height:25px;color:#fff"><p><i class="z">球会友谊</i></p></div><div class="c" style="left:85px;top:448px;width:74px;height:25px;"><p>24-10-10</p></div><div class="c" style="left:160px;top:448px;width:106px;height:25px;"><p><span style="color:#008000"><i class="z">奥格斯堡</i></span></p></div><div class="c" style="left:267px;top:448px;width:87px;height:25px;"><p><span style="color:#cc1414">1-0</span>(1-0)</p></div><div class="c" style="left:355px;top:448px;width:37px;height:25px;"><p>7-10</p></div><div class="c" style="left:393px;top:448px;width:127px;height:25px;"><p><i class="z">雷根斯堡</i></p></div><div class="c" style="left:521px;top:448px;width:47px;height:25px;"><p>0.97</p></div><div class="c" style="left:703px;top:448px;width:73px;height:25px;"><p>1.56</p></div><div class="c" style="left:899px;top:448px;width:36px;height:25px;color:#cc1414"><p><i class="z">胜</i></p></div><div class="c" style="left:569px;top:448px;width:82px;height:25px;"><p><i class="z">一球</i></p></div><div class="c" style="left:777px;top:448px;width:59px;height:25px;"><p>4.18</p></div><div class="c" style="left:936px;top:448px;width:37px;height:25px;color:#008000"><p><i class="z">走</i></p></div><div class="c" style="left:652px;top:448px;width:50px;height:25px;"><p>0.85</p></div><div class="c" style="left:837px;top:448px;width:61px;height:25px;"><p>4.62</p></div><div class="c" style="left:974px;top:448px;width:56px;height:25px;color:#1c1ca8"><p><i class="z">小</i></p></div><div class="c" style="left:4px;top:474px;width:80px;height:25px;color:#fff"><p><i class="z">德甲</i></p></div><div class="c" style="left:85px;top:474px;width:74px;height:25px;"><p>24-10-05</p></div><div class="c" style="left:160px;top:474px;width:106px;height:25px;"><p><span style="color:#008000"><i class="z">奥格斯堡</i></span></p></div><div class="c" style="left:267px;top:474px;width:87px;height:25px;"><p><span style="color:#cc1414">2-1</span>(1-0)</p></div><div class="c" style="left:355px;top:474px;width:37px;height:25px;"><p>6-5</p></div><div class="c" style="left:393px;top:474px;width:127px;height:25px;"><p><i class="z">门兴格拉德巴赫</i></p></div><div class="c" style="left:521px;top:474px;width:47px;height:25px;"><p>0.82</p></div><div class="c" style="left:703px;top:474px;width:73px;height:25px;"><p>2.39</p></div><div class="c" style="left:899px;top:474px;width:36px;height:25px;color:#cc1414"><p><i class="z">胜</i></p></div><div class="c" style="left:569px;top:474px;width:82px;height:25px;"><p><i class="z">平手</i></p></div><div class="c" style="left:777px;top:474px;width:59px;height:25px;"><p>3.72</p></div><div class="c" style="left:936px;top:474px;width:37px;height:25px;color:#cc1414"><p><i class="z">赢</i></p></div><div class="c" style="left:652px;top:474px;width:50px;height:25px;"><p>1.07</p></div><div class="c" style="left:837px;top:474px;width:61px;height:25px;"><p>2.73</p></div><div class="c" style="left:974px;top:474px;width:56px;height:25px;color:#008000"><p><i class="z">走</i></p></div><div class="c" style="left:4px;top:500px;width:80px;height:25px;color:#fff"><p><i class="z">德甲</i></p></div><div class="c" style="left:85px;top:500px;width:74px;height:25px;"><p>24-09-28</p></div><div class="c" style="left:160px;top:500px;width:106px;height:25px;"><p>RB<i class="z">莱比锡</i></p></div><div class="c" style="left:267px;top:500px;width:87px;height:25px;"><p><span style="color:#cc1414">4-0</span>(2-0)</p></div><div class="c" style="left:355px;top:500px;width:37px;height:25px;"><p>8-5</p></div><div class="c" style="left:393px;top:500px;width:127px;height:25px;"><p><span style="color:#008000"><i class="z">奥格斯堡</i></span></p></div><div class="c" style="left:521px;top:500px;width:47px;height:25px;"><p>0.82</p></div><div class="c" style="left:703px;top:500px;width:73px;height:25px;"><p>1.46</p></div><div class="c" style="left:899px;top:500px;width:36px;height:25px;color:#1c1ca8"><p><i class="z">负</i></p></div><div class="c" style="left:569px;top:500px;width:82px;height:25px;"><p><i class="z">一球</i></p></div><div class="c" style="left:777px;top:500px;width:59px;height:25px;"><p>4.84</p></div><div class="c" style="left:936px;top:500px;width:37px;height:25px;color:#1c1ca8"><p><i class="z">输</i></p></div><div class="c" style="left:652px;top:500px;width:50px;height:25px;"><p>1.07</p></div><div class="c" style="left:837px;top:500px;width:61px;height:25px;"><p>6.11</p></div><div class="c" style="left:974px;top:500px;width:56px;height:25px;color:#cc1414"><p><i class="z">大</i></p></div><div class="c" style="left:4px;top:526px;width:80px;height:25px;color:#fff"><p><i class="z">德甲</i></p></div><div class="c" style="left:85px;top:526px;width:74px;height:25px;"><p>24-09-21</p></div><div class="c" style="left:160px;top:526px;width:106px;height:25px;"><p><b class="rc">1</b><span style="color:#008000"><i class="z">奥格斯堡</i></span></p></div><div class="c" style="left:267px;top:526px;width:87px;height:25px;"><p><span style="color:#cc1414">2-3</span>(1-2)</p></div><div class="c" style="left:355px;top:526px;width:37px;height:25px;"><p>14-1</p></div><div class="c" style="left:393px;top:526px;width:127px;height:25px;"><p><i class="z">美因茨</i><b class="rc">1</b></p></div><div class="c" style="left:521px;top:526px;width:47px;height:25px;"><p>1.06</p></div><div class="c" style="left:703px;top:526px;width:73px;height:25px;"><p>2.38</p></div><div class="c" style="left:899px;top:526px;width:36px;height:25px;color:#1c1ca8"><p><i class="z">负</i></p></div><div class="c" style="left:569px;top:526px;width:82px;height:25px;"><p><i class="z">平</i>/<i class="z">半</i></p></div><div class="c" style="left:777px;top:526px;width:59px;height:25px;"><p>3.49</p></div><div class="c" style="left:936px;top:526px;width:37px;height:25px;color:#1c1ca8"><p><i class="z">输</i></p></div><div class="c" style="left:652px;top:526px;width:50px;height:25px;"><p>0.83</p></div><div class="c" style="left:837px;top:526px;width:61px;height:25px;"><p>2.88</p></div><div class="c" style="left:974px;top:526px;width:56px;height:25px;color:#cc1414"><p><i class="z">大</i></p></div><div class="c" style="left:4px;top:552px;width:80px;height:25px;color:#fff"><p><i class="z">德甲</i></p></div><div class="c" style="left:85px;top:552px;width:74px;height:25px;"><p>24-09-15</p></div><div class="c" style="left:160px;top:552px;width:106px;height:25px;"><p><span style="color:#008000"><i class="z">奥格斯堡</i></span></p></div><div class="c" style="left:267px;top:552px;width:87px;height:25px;"><p><span style="color:#cc1414">3-1</span>(0-0)</p></div><div class="c" style="left:355px;top:552px;width:37px;height:25px;"><p>7-7</p></div><div class="c" style="left:393px;top:552px;width:127px;height:25px;"><p><i class="z">圣保利</i></p></div><div class="c" style="left:521px;top:552px;width:47px;height:25px;"><p>1.09</p></div><div class="c" style="left:703px;top:552px;width:73px;height:25px;"><p>2.10</p></div><div class="c" style="left:899px;top:552px;width:36px;height:25px;color:#cc1414"><p><i class="z">胜</i></p></div><div class="c" style="left:569px;top:552px;width:82px;height:25px;"><p><i class="z">半球</i></p></div><div class="c" style="left:777px;top:552px;width:59px;height:25px;"><p>3.42</p></div><div class="c" style="left:936px;top:552px;width:37px;height:25px;color:#cc1414"><p><i class="z">赢</i></p></div><div class="c" style="left:652px;top:552px;width:50px;height:25px;"><p>0.80</p></div><div class="c" style="left:837px;top:552px;width:61px;height:25px;"><p>3.52</p></div><div class="c" style="left:974px;top:552px;width:56px;height:25px;color:#cc1414"><p><i class="z">大</i></p></div><div class="c" style="left:4px;top:578px;width:80px;height:25px;color:#fff"><p><i class="z">球会友谊</i></p></div><div class="c" style="left:85px;top:578px;width:74px;height:25px;"><p>24-09-05</p></div><div class="c" style="left:160px;top:578px;width:106px;height:25px;"><p><span style="color:#008000"><i class="z">奥格斯堡</i>(<i class="z">中</i>)</span></p></div><div class="c" style="left:267px;top:578px;width:87px;height:25px;"><p><span style="color:#cc1414">4-1</span>(3-0)</p></div><div class="c" style="left:355px;top:578px;width:37px;height:25px;"><p>3-4</p></div><div class="c" style="left:393px;top:578px;width:127px;height:25px;"><p><i class="z">乌尔姆</i></p></div><div class="c" style="left:521px;top:578px;width:47px;height:25px;"><p>1.02</p></div><div class="c" style="left:703px;top:578px;width:73px;height:25px;"><p>1.57</p></div><div class="c" style="left:899px;top:578px;width:36px;height:25px;color:#cc1414"><p><i class="z">胜</i></p></div><div class="c" style="left:569px;top:578px;width:82px;height:25px;"><p><i class="z">半</i>/<i class="z">一</i></p></div><div class="c" style="left:777px;top:578px;width:59px;height:25px;"><p>4.15</p></div><div class="c" style="left:936px;top:578px;width:37px;height:25px;color:#cc1414"><p><i class="z">赢</i></p></div><div class="c" style="left:652px;top:578px;width:50px;height:25px;"><p>0.80</p></div><div class="c" style="left:837px;top:578px;width:61px;height:25px;"><p>4.65</p></div><div class="c" style="left:974px;top:578px;width:56px;height:25px;color:#cc1414"><p><i class="z">大</i></p></div><div class="c" style="left:4px;top:604px;width:80px;height:25px;color:#fff"><p><i class="z">德甲</i></p></div><div class="c" style="left:85px;top:604px;width:74px;height:25px;"><p>24-09-01</p></div><div class="c" style="left:160px;top:604px;width:106px;height:25px;"><p><i class="z">海登海姆</i></p></div><div class="c" style="left:267px;top:604px;width:87px;height:25px;"><p><span style="color:#cc1414">4-0</span>(2-0)</p></div><div class="c" style="left:355px;top:604px;width:37px;height:25px;"><p>5-6</p></div><div class="c" style="left:393px;top:604px;width:127px;height:25px;"><p><span style="color:#008000"><i class="z">奥格斯堡</i></span></p></div><div class="c" style="left:521px;top:604px;width:47px;height:25px;"><p>1.08</p></div><div class="c" style="left:703px;top:604px;width:73px;height:25px;"><p>2.39</p></div><div class="c" style="left:899px;top:604px;width:36px;height:25px;color:#1c1ca8"><p><i class="z">负</i></p></div><div class="c" style="left:569px;top:604px;width:82px;height:25px;"><p><i class="z">平</i>/<i class="z">半</i></p></div><div class="c" style="left:777px;top:604px;width:59px;height:25px;"><p>3.47</p></div><div class="c" style="left:936px;top:604px;width:37px;height:25px;color:#1c1ca8"><p><i class="z">输</i></p></div><div class="c" style="left:652px;top:604px;width:50px;height:25px;"><p>0.81</p></div><div class="c" style="left:837px;top:604px;width:61px;height:25px;"><p>2.87</p></div><div class="c" style="left:974px;top:604px;width:56px;height:25px;color:#cc1414"><p><i class="z">大</i></p></div><div class="c" style="left:4px;top:630px;width:80px;height:25px;color:#fff"><p><i class="z">德甲</i></p></div><div class="c" style="left:85px;top:630px;width:74px;height:25px;"><p>24-08-24</p></div><div class="c" style="left:160px;top:630px;width:106px;height:25px;"><p><span style="color:#008000"><i class="z">奥格斯堡</i></span></p></div><div class="c" style="left:267px;top:630px;width:87px;height:25px;"><p><span style="color:#cc1414">2-2</span>(2-1)</p></div><div class="c" style="left:355px;top:630px;width:37px;height:25px;"><p>4-2</p></div><div class="c" style="left:393px;top:630px;width:127px;height:25px;"><p><i class="z">云达不莱梅</i></p></div><div class="c" style="left:521px;top:630px;width:47px;height:25px;"><p>0.86</p></div><div class="c" style="left:703px;top:630px;width:73px;height:25px;"><p>2.38</p></div><div class="c" style="left:899px;top:630px;width:36px;height:25px;color:#008000"><p><i class="z">平</i></p></div><div class="c" style="left:569px;top:630px;width:82px;height:25px;"><p><i class="z">平手</i></p></div><div class="c" style="left:777px;top:630px;width:59px;height:25px;"><p>3.54</p></div><div class="c" style="left:936px;top:630px;width:37px;height:25px;color:#008000"><p><i class="z">走</i></p></div><div class="c" style="left:652px;top:630px;width:50px;height:25px;"><p>1.03</p></div><div class="c" style="left:837px;top:630px;width:61px;height:25px;"><p>2.84</p></div><div class="c" style="left:974px;top:630px;width:56px;height:25px;color:#cc1414"><p><i class="z">大</i></p></div><div class="c" style="left:4px;top:656px;width:80px;height:25px;color:#fff"><p><i class="z">德国杯</i></p></div><div class="c" style="left:85px;top:656px;width:74px;height:25px;"><p>24-08-18</p></div><div class="c" style="left:160px;top:656px;width:106px;height:25px;"><p>BFC<i class="z">维多利亚</i></p></div><div class="c" style="left:267px;top:656px;width:87px;height:25px;"><p><span style="color:#cc1414">1-4</span>(1-1)</p></div><div class="c" style="left:355px;top:656px;width:37px;height:25px;"><p>3-7</p></div><div class="c" style="left:393px;top:656px;width:127px;height:25px;"><p><span style="color:#008000"><i class="z">奥格斯堡</i></span></p></div><div class="c" style="left:521px;top:656px;width:47px;height:25px;"><p>0.80</p></div><div class="c" style="left:703px;top:656px;width:73px;height:25px;"><p>11.02</p></div><div class="c" style="left:899px;top:656px;width:36px;height:25px;color:#cc1414"><p><i class="z">胜</i></p></div><div class="c" style="left:569px;top:656px;width:82px;height:25px;"><p><i class="z">受两球</i></p></div><div class="c" style="left:777px;top:656px;width:59px;height:25px;"><p>7.03</p></div><div class="c" style="left:936px;top:656px;width:37px;height:25px;color:#cc1414"><p><i class="z">赢</i></p></div><div class="c" style="left:652px;top:656px;width:50px;height:25px;"><p>1.02</p></div><div class="c" style="left:837px;top:656px;width:61px;height:25px;"><p>1.18</p></div><div class="c" style="left:974px;top:656px;width:56px;height:25px;color:#cc1414"><p><i class="z">大</i></p></div><div class="c" style="left:4px;top:682px;width:80px;height:25px;color:#fff"><p><i class="z">球会友谊</i></p></div><div class="c" style="left:85px;top:682px;width:74px;height:25px;"><p>24-08-10</p></div><div class="c" style="left:160px;top:682px;width:106px;height:25px;"><p><span style="color:#008000"><i class="z">奥格斯堡</i></span></p></div><div class="c" style="left:267px;top:682px;width:87px;height:25px;"><p><span style="color:#cc1414">1-3</span>(1-2)</p></div><div class="c" style="left:355px;top:682px;width:37px;height:25px;"><p>6-3</p></div><div class="c" style="left:393px;top:682px;width:127px;height:25px;"><p><i class="z">马赛</i></p></div><div class="c" style="left:521px;top:682px;width:47px;height:25px;"><p>0.83</p></div><div class="c" style="left:703px;top:682px;width:73px;height:25px;"><p>2.69</p></div><div class="c" style="left:899px;top:682px;width:36px;height:25px;color:#1c1ca8"><p><i class="z">负</i></p></div><div class="c" style="left:569px;top:682px;width:82px;height:25px;"><p><i class="z">受平</i>/<i class="z">半</i></p></div><div class="c" style="left:777px;top:682px;width:59px;height:25px;"><p>3.48</p></div><div class="c" style="left:936px;top:682px;width:37px;height:25px;color:#1c1ca8"><p><i class="z">输</i></p></div><div class="c" style="left:652px;top:682px;width:50px;height:25px;"><p>0.99</p></div><div class="c" style="left:837px;top:682px;width:61px;height:25px;"><p>2.29</p></div><div class="c" style="left:974px;top:682px;width:56px;height:25px;color:#cc1414"><p><i class="z">大</i></p></div><div class="c" style="left:4px;top:708px;width:1026px;height:25px;"><p><i class="z">近</i><span style="color:#cc1414">10</span><i class="z">场</i>,<i class="z">胜</i>5<i class="z">平</i>1<i class="z">负</i>4, <i class="z">胜率</i>:<span style="color:#cc1414">50%</span> <i class="z">让胜率</i>:<span style="color:#cc1414">40%</span> <i class="z">大率</i>:<span style="color:#cc1414">80%</span> <i class="z">单率</i>:<span style="color:#cc1414">50%</span></p></div><div class="sel" style="left:552px;top:409px;width:59px;height:17px"><span style="top:1px">Crow*</span><svg width="10" height="7" viewBox="0 0 10 7" style="position:absolute;right:4px;top:5px"><path d="M1.2 1.3 L5 5.1 L8.8 1.3" stroke="#111" stroke-width="2.3" fill="none"/></svg></div><div class="sel" style="left:620px;top:409px;width:49px;height:17px"><span style="top:1px"><i class="z">终指</i></span><svg width="10" height="7" viewBox="0 0 10 7" style="position:absolute;right:4px;top:5px"><path d="M1.2 1.3 L5 5.1 L8.8 1.3" stroke="#111" stroke-width="2.3" fill="none"/></svg></div><div class="sel" style="left:737px;top:409px;width:67px;height:17px"><span style="top:1px"><i class="z">平均值</i></span><svg width="10" height="7" viewBox="0 0 10 7" style="position:absolute;right:4px;top:5px"><path d="M1.2 1.3 L5 5.1 L8.8 1.3" stroke="#111" stroke-width="2.3" fill="none"/></svg></div><div class="sel" style="left:814px;top:409px;width:49px;height:17px"><span style="top:1px"><i class="z">终指</i></span><svg width="10" height="7" viewBox="0 0 10 7" style="position:absolute;right:4px;top:5px"><path d="M1.2 1.3 L5 5.1 L8.8 1.3" stroke="#111" stroke-width="2.3" fill="none"/></svg></div><div class="sel" style="left:939px;top:409px;width:49px;height:17px"><span style="top:1px"><i class="z">全场</i></span><svg width="10" height="7" viewBox="0 0 10 7" style="position:absolute;right:4px;top:5px"><path d="M1.2 1.3 L5 5.1 L8.8 1.3" stroke="#111" stroke-width="2.3" fill="none"/></svg></div></body></html>
